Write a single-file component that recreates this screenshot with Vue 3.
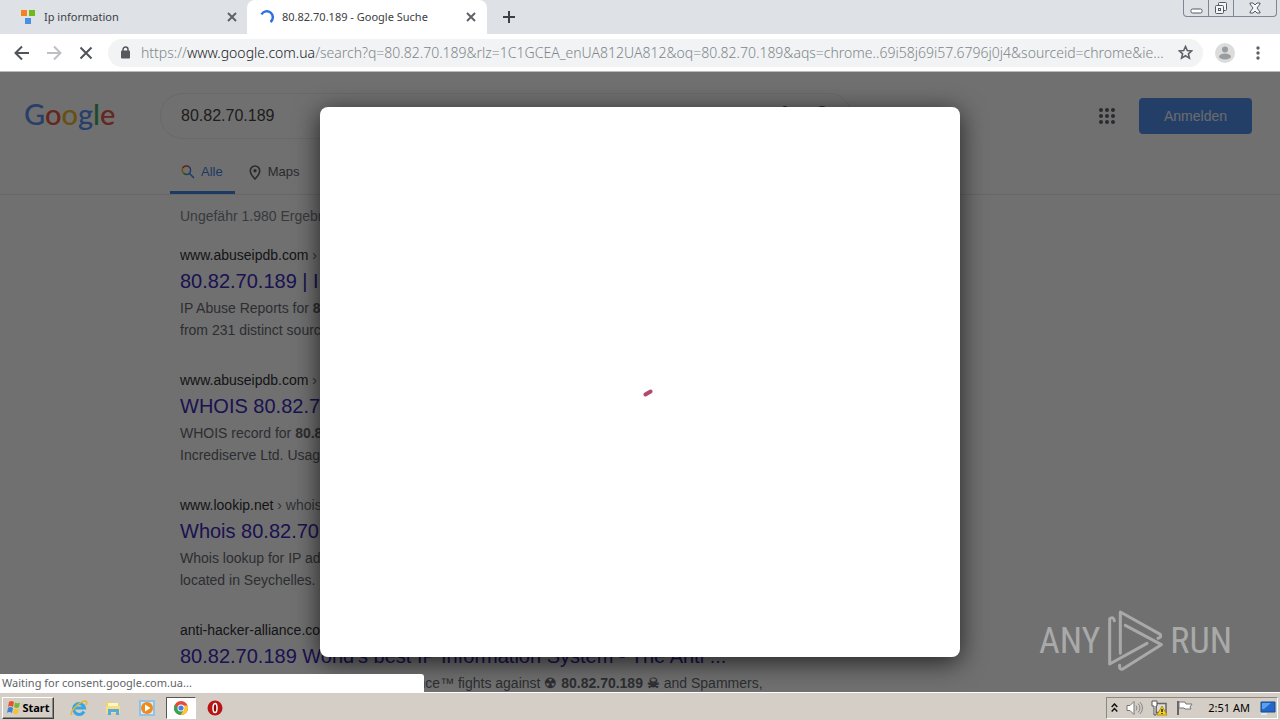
<script setup>
import { ref } from 'vue'

const query = ref('80.82.70.189')
const urlRest = '/search?q=80.82.70.189&rlz=1C1GCEA_enUA812UA812&oq=80.82.70.189&aqs=chrome..69i58j69i57.6796j0j4&sourceid=chrome&ie...'
const results = [
  { host: 'www.abuseipdb.com', path: 'check', title: '80.82.70.189 | IP', a: 'IP Abuse Reports for ', b: '80.82.70.189', c: 'from 231 distinct sources' },
  { host: 'www.abuseipdb.com', path: 'whois', title: 'WHOIS 80.82.70.189', a: 'WHOIS record for ', b: '80.82.70.189', c: 'Incrediserve Ltd. Usage' },
  { host: 'www.lookip.net', path: 'whois', title: 'Whois 80.82.70.189', a: 'Whois lookup for IP address', b: '', c: 'located in Seychelles.' }
]
</script>

<template>
  <div class="screen">
    <header class="tabs">
      <div class="tab first">
        <svg class="fav" width="14" height="14" viewBox="0 0 14 14"><path fill="#f58220" d="M0 0h6v6H0z" /><path fill="#6fb91b" d="M8 0h6v6H8z" /><path fill="#4a90e2" d="M4 8h6v6H4z" /></svg>
        <button class="tab-title">Ip information</button>
        <button class="close" aria-label="Close Ip information"><svg width="10" height="10" viewBox="0 0 10 10"><path d="M1 1l8 8M9 1L1 9" stroke="#5f6368" stroke-width="2" /></svg></button>
      </div>
      <div class="tab active">
        <svg class="fav" width="14" height="14" viewBox="0 0 14 14"><path d="M1.500 4.500A6 6 0 1 1 10.500 12" fill="none" stroke="#2f6fe4" stroke-width="2.400" /></svg>
        <button class="tab-title">80.82.70.189 - Google Suche</button>
        <button class="close" aria-label="Close Google Suche"><svg width="10" height="10" viewBox="0 0 10 10"><path d="M1 1l8 8M9 1L1 9" stroke="#5f6368" stroke-width="2" /></svg></button>
      </div>
      <button class="newtab" aria-label="New tab"><svg width="12" height="12" viewBox="0 0 12 12"><path d="M6 0v12M0 6h12" stroke="#3c4043" stroke-width="2" /></svg></button>
      <div class="winbtns">
        <button aria-label="Minimize"><svg width="13" height="13" viewBox="0 0 13 13"><rect x="1" y="7" width="11" height="4" rx="1.500" fill="#fff" stroke="#555b66" /></svg></button>
        <button aria-label="Restore"><svg width="14" height="14" viewBox="0 0 14 14" fill="#f4f5f7" stroke="#555b66"><rect x="4.500" y="1.500" width="8" height="8" rx="1" /><rect x="1.500" y="4.500" width="8" height="8" rx="1" /><rect x="4.500" y="7.500" width="2" height="2" /></svg></button>
        <button class="wide" aria-label="Close window"><svg width="12" height="12" viewBox="0 0 12 12"><path d="M1 1h3l2 2 2-2h3v1L8 6l3 4v1H8L6 9l-2 2H1v-1l3-4-3-4z" fill="#f6f7f8" stroke="#555b66" /></svg></button>
      </div>
    </header>

    <nav class="toolbar">
      <button aria-label="Back"><svg width="16" height="16" viewBox="0 0 16 16"><path d="M8 1.500L1.500 8 8 14.500M2 8h13" fill="none" stroke="#505357" stroke-width="2" /></svg></button>
      <button aria-label="Forward"><svg width="16" height="16" viewBox="0 0 16 16"><path d="M8 1.500L14.500 8 8 14.500M14 8H1" fill="none" stroke="#bdbfc2" stroke-width="2" /></svg></button>
      <button aria-label="Stop"><svg width="14" height="14" viewBox="0 0 14 14"><path d="M1.500 1.500l11 11M12.500 1.500l-11 11" stroke="#505357" stroke-width="2" /></svg></button>
      <div class="omnibox">
        <svg width="10" height="13" viewBox="0 0 10 13"><rect y="4.500" width="9" height="8" rx="1" fill="#55585c" /><path d="M2 5V3.500a2.500 2.500 0 0 1 5 0V5" fill="none" stroke="#55585c" stroke-width="1.500" /></svg>
        <div class="url"><span>https://</span><b>www.google.com.ua</b><span>{{ urlRest }}</span></div>
        <button class="star" aria-label="Bookmark"><svg width="15" height="15" viewBox="0 0 15 15"><path d="M7.500 1.500l1.800 4 4.400.4-3.300 2.900 1 4.300-3.900-2.300-3.900 2.300 1-4.300L1.300 5.900l4.400-.4z" fill="none" stroke="#5f6368" stroke-width="1.600" /></svg></button>
      </div>
      <button class="avatar" aria-label="Profile"><svg width="20" height="20" viewBox="0 0 20 20"><circle cx="10" cy="10" r="10" fill="#dcdcdc" /><circle cx="10" cy="6.500" r="3" fill="#9a9da0" /><ellipse cx="10" cy="13.500" rx="6" ry="3" fill="#9a9da0" /></svg></button>
      <button class="kebab" aria-label="Menu"><svg width="4" height="14" viewBox="0 0 4 14" fill="#5f6368"><circle cx="2" cy="2" r="1.700" /><circle cx="2" cy="7" r="1.700" /><circle cx="2" cy="12" r="1.700" /></svg></button>
    </nav>

    <div class="viewport">
      <main class="page">
        <div class="head">
          <a class="logo" href="#" aria-label="Google"><span class="bl">G</span><span class="re">o</span><span class="ye">o</span><span class="bl">g</span><span class="gr">l</span><span class="re">e</span></a>
          <form class="search" @submit.prevent>
            <input v-model="query" aria-label="Suche">
            <svg width="68" height="20" viewBox="0 0 68 20"><rect x="9" y="0" width="6" height="12" rx="3" fill="#555" /><path d="M6 8a6 6 0 0 0 12 0M12 14v4" fill="none" stroke="#555" stroke-width="2" /><circle cx="49" cy="7" r="6" fill="none" stroke="#555" stroke-width="2" /><path d="M53 11l6 7" stroke="#555" stroke-width="2" /></svg>
          </form>
          <button class="apps" aria-label="Google-Apps"><svg width="16" height="16" viewBox="0 0 16 16" fill="#5f6368"><circle v-for="n in 9" :key="n" :cx="2 + ((n - 1) % 3) * 6" :cy="2 + Math.floor((n - 1) / 3) * 6" r="2" /></svg></button>
          <button class="login">Anmelden</button>
        </div>
        <div class="kinds">
          <a class="kind on" href="#"><svg width="14" height="14" viewBox="0 0 14 14" fill="none" stroke-width="1.500"><path d="M1.700 3A4.500 4.500 0 0 1 8 1.700" stroke="#ea4335" /><path d="M1.700 3a4.500 4.500 0 0 0 .8 5" stroke="#fbbc05" /><path d="M2.500 8a4.500 4.500 0 0 0 4 1.500" stroke="#34a853" /><path d="M8 1.700a4.500 4.500 0 0 1-1.500 7.800M8.500 8.500L13 13" stroke="#4285f4" /></svg>Alle</a>
          <a class="kind" href="#"><svg width="12" height="15" viewBox="0 0 12 15"><path d="M6 1a4.700 4.700 0 0 1 4.700 4.700C10.700 9 6 14 6 14S1.300 9 1.300 5.700A4.700 4.700 0 0 1 6 1z" fill="none" stroke="#5f6368" stroke-width="1.600" /><circle cx="6" cy="5.700" r="1.700" fill="#5f6368" /></svg>Maps</a>
        </div>
        <div class="list">
          <p class="stats">Ungefähr 1.980 Ergebnisse</p>
          <article v-for="r in results" :key="r.title" class="result">
            <div class="cite">{{ r.host }} <span>› {{ r.path }}</span></div>
            <h3><a href="#">{{ r.title }}</a></h3>
            <p>{{ r.a }}<b>{{ r.b }}</b></p>
            <p>{{ r.c }}</p>
          </article>
          <article class="result">
            <div class="cite">anti-hacker-alliance.com</div>
            <h3><a href="#">80.82.70.189 World's best IP Information System - The Anti ...</a></h3>
            <p class="tail">Alliance™ fights against <b>☢ 80.82.70.189 ☠</b> and Spammers,</p>
          </article>
        </div>
      </main>
      <div class="overlay">
        <div class="dialog" role="dialog" aria-label="Consent"><i class="loader"></i></div>
      </div>
      <div class="mark" aria-label="ANY RUN">
        <span>ANY</span>
        <svg width="56" height="64" viewBox="327 57 168 192" fill="none" stroke="#a9a9a9" stroke-width="9" stroke-linejoin="round" stroke-linecap="round"><path d="M349 92Q347 78 335 86V222L447 160" /><path d="M367 190V66L487 133Q491 143 480 145" /><path d="M382 106L490 164 373 238Q363 238 365 226" /></svg>
        <span>RUN</span>
      </div>
      <div class="status">Waiting for consent.google.com.ua...</div>
    </div>

    <footer class="taskbar">
      <button class="start">
        <svg width="15" height="15" viewBox="0 0 15 15"><path d="M3 2q2-2 5 0L7 7Q4 5 2 7z" fill="#e8542a" /><path d="M9 2.500q3 1.500 5 0L13 7q-2 2-5 0z" fill="#78b833" /><path d="M2 8q2-2 5 0l-1 5q-3-2-5 0z" fill="#3b83d6" /><path d="M8 8.500q3 1.500 5 0L12 13q-2 2-5 0z" fill="#f6c32c" /></svg>Start
      </button>
      <div class="quick">
        <button aria-label="Internet Explorer"><svg width="18" height="18" viewBox="0 0 18 18" fill="none"><path d="M14 12.500A5.500 5.500 0 1 1 14.500 9H5" stroke="#37a6e2" stroke-width="3" /><path d="M2 16C-1 13 9 3 15 2q3 0 1 4" stroke="#e9b62e" stroke-width="1.500" /></svg></button>
        <button aria-label="Explorer"><svg width="18" height="18" viewBox="0 0 18 18"><path d="M2 3h5l1 2h7v9H2z" fill="#efd06a" /><path d="M4 4h10v5H4z" fill="#fff6bd" /><path d="M2 7h14v7H2z" fill="#f5de87" /><path d="M4 16v-6h11v6h-3v-3H7v3z" fill="#58aad8" /></svg></button>
        <button aria-label="Media Player"><svg width="18" height="18" viewBox="0 0 18 18"><path d="M1 1h16v16H1z" fill="#8fc3ec" /><path d="M3 3h12v12H3z" fill="#d8ebf8" /><circle cx="9" cy="9" r="6" fill="#f28a18" /><path d="M7 5.500v7L12.500 9z" fill="#fff" /></svg></button>
        <button class="pressed" aria-label="Chrome"><svg width="16" height="16" viewBox="0 0 16 16"><circle cx="8" cy="8" r="7" fill="#e24a3c" /><path d="M2 4.500A7 7 0 0 0 7.500 15L10 10 6 10z" fill="#35a552" /><path d="M14.500 5.500A7 7 0 0 1 7.500 15l4-6-1-3.500z" fill="#fbc92f" /><circle cx="8" cy="8" r="3.500" fill="#fff" /><circle cx="8" cy="8" r="2.600" fill="#4380e8" /></svg></button>
        <button aria-label="Opera"><svg width="16" height="16" viewBox="0 0 16 16"><circle cx="8" cy="8" r="7.500" fill="#b91515" /><ellipse cx="8" cy="8" rx="2" ry="4.500" fill="#8b0808" stroke="#fff" stroke-width="1.500" /></svg></button>
      </div>
      <div class="tray">
        <svg width="7" height="10" viewBox="0 0 7 10"><path d="M.7 4l2.800-3 2.800 3M.7 8.500l2.800-3 2.800 3" fill="none" stroke="#111" stroke-width="1.500" /></svg>
        <svg width="17" height="16" viewBox="0 0 17 16"><path d="M1 5.500h3l4-4v13l-4-4H1z" fill="#fff" stroke="#777" /><path d="M10 5.500q2 2.500 0 5M12 3.500q4 4.500 0 9M14 2q5 6 0 12" fill="none" stroke="#888" /></svg>
        <svg width="17" height="16" viewBox="0 0 17 16"><path d="M5 3.500h10v9H5z" fill="#ddd" stroke="#666" stroke-width="1.500" /><path d="M1 1h5v5H5v9H3V6H1z" fill="#fff" stroke="#555" /><path d="M11 6l5 9H6z" fill="#f7d51d" stroke="#b79200" /><path d="M11 9v3M11 13v1" stroke="#222" stroke-width="1.500" /></svg>
        <svg width="17" height="16" viewBox="0 0 17 16"><path d="M2 1v14" stroke="#666" stroke-width="2" /><path d="M3 2h6l1 2h6l-2 3 1 2H9L8 8H3z" fill="#fff" stroke="#777" /></svg>
        <time>2:51 AM</time>
        <svg width="16" height="14" viewBox="0 0 16 14"><path d="M1 1h14v10H1z" fill="#2368c8" stroke="#17498f" /><path d="M2 2h9L4 8H2z" fill="#5aa0ec" /><path d="M1 12h6v2H1z" fill="#dceaf8" /></svg>
      </div>
    </footer>
  </div>
</template>

<style>
body { margin: 0; overflow: hidden; }
</style>

<style scoped>
* { box-sizing: border-box; }
.screen { display: flex; flex-direction: column; height: 100vh; overflow: hidden; font: 11px/16px "Noto Sans", "DejaVu Sans", sans-serif; color: #3c4043; }
button { border: 0; padding: 0; background: none; font: inherit; color: inherit; display: flex; align-items: center; justify-content: center; }
svg { display: block; flex: none; }
a { text-decoration: none; color: inherit; }
p, h3 { margin: 0; font-weight: 400; }

.tabs { display: flex; height: 34px; background: #dee1e6; flex: none; }
.tab { display: flex; align-items: center; width: 240px; padding: 0 11px 0 13px; }
.tab.first { width: 247px; padding: 0 10px 0 21px; }
.tab.active { background: #fff; border-radius: 8px 8px 0 0; }
.tab-title { margin-left: 9px; flex: 1; justify-content: flex-start; white-space: nowrap; }
.tab.active .tab-title { margin-left: 8px; }
.newtab { width: 44px; }
.winbtns { display: flex; margin: 0 3px 0 auto; height: 17px; border: 1px solid #7f8693; border-top: 0; border-radius: 0 0 4px 4px; }
.winbtns button { width: 25px; border-right: 1px solid #7f8693; }
.winbtns .wide { width: 42px; border: 0; }

.toolbar { display: flex; align-items: center; height: 37px; background: #fff; padding: 0 8px 0 6px; flex: none; }
.toolbar > button { width: 32px; height: 32px; }
.omnibox { display: flex; align-items: center; flex: 1; min-width: 0; height: 28px; margin: 0 8px 0 6px; padding: 0 10px 0 13px; background: #f1f3f4; border-radius: 14px; }
.url { flex: 1; min-width: 0; margin-left: 10px; font-size: 14px; line-height: 20px; color: #80868b; white-space: nowrap; overflow: hidden; font-weight: 300; }
.url b { font-weight: 300; color: #202124; }
.toolbar > .avatar { width: 28px; }
.toolbar > .kebab { width: 28px; margin-left: 5px; }

.viewport { position: relative; flex: 1; min-height: 0; overflow: hidden; border-top: 1px solid #bbb; }
.page { height: 100%; background: #fff; font-family: "Liberation Sans", Arial, sans-serif; }
.head { display: flex; align-items: center; height: 87px; padding: 0 28px 0 24px; }
.logo { width: 136px; padding-bottom: 4px; font: 500 29px/40px Lato, sans-serif; }
.bl { color: #5a8ff0; } .re { color: #e8574a; } .ye { color: #e9b92a; } .gr { color: #45a860; }
.search { display: flex; align-items: center; width: 692px; height: 46px; padding: 0 10px 0 20px; border: 1px solid #eceef1; border-radius: 23px; }
.search input { flex: 1; min-width: 0; border: 0; padding: 0; background: none; outline: 0; font: 16px/20px "Liberation Sans", Arial, sans-serif; color: #444; }
.apps { margin-left: auto; width: 16px; }
.login { margin-left: 24px; width: 113px; height: 36px; border-radius: 4px; background: #5090ea; color: #f0f4fa; font-size: 14px; }
.kinds { display: flex; height: 36px; padding-left: 170px; border-bottom: 1px solid #ebebeb; font-size: 13px; line-height: 16px; }
.kind { display: flex; align-items: center; gap: 7px; height: 35px; padding: 0 12px 9px 14px; color: #5f6368; }
.kind.on { gap: 6px; padding: 0 12px 6px 11px; color: #4285e0; border-bottom: 3px solid #4285e0; }
.list { padding: 10px 0 0 180px; font-size: 14px; line-height: 22px; color: #666a70; }
.stats { margin-bottom: 17px; color: #80858a; }
.result { width: 600px; margin-bottom: 28px; white-space: nowrap; }
.cite { color: #303134; }
.cite span { color: #70757a; }
.result h3 { font-size: 20px; line-height: 31px; color: #3d2bb8; }
.tail { padding-left: 211px; }

.overlay { position: absolute; inset: 0; display: flex; align-items: center; justify-content: center; background: rgba(0, 0, 0, 0.56); }
.dialog { display: flex; align-items: center; justify-content: center; width: 50%; height: 550px; border-radius: 8px; background: #fff; box-shadow: 0 5px 26px rgba(0, 0, 0, 0.7); }
.loader { width: 10px; height: 4px; margin: 22px 0 0 15px; border-radius: 2px; background: #b04a6e; transform: rotate(-30deg); }
.status { position: absolute; left: 0; bottom: 0; width: 424px; height: 18px; padding-left: 2px; line-height: 18px; border-radius: 0 3px 0 0; background: #fff; color: #5f6368; }
.mark { position: absolute; right: 48px; bottom: 19px; display: flex; align-items: center; gap: 7px; color: #a9a9a9; font: 36px/44px "Liberation Sans Narrow", "Roboto Condensed", "DejaVu Sans Condensed", sans-serif; }

.taskbar { display: flex; align-items: center; height: 28px; flex: none; padding: 2px 2px 0; background: #d4cec6; border-top: 1px solid #fff; color: #000; }
.start { width: 52px; height: 22px; gap: 1px; border: 1px solid; border-color: #fff #404040 #404040 #fff; box-shadow: inset -1px -1px #8c8880; font-weight: 700; }
.quick { display: flex; margin-left: 10px; gap: 4px; }
.quick button { width: 30px; height: 22px; }
.quick .pressed { background: #fff; border: 1px solid; border-color: #555 #fff #fff #555; }
.tray { display: flex; align-items: center; gap: 8px; height: 22px; margin-left: auto; padding: 0 1px 0 4px; border: 1px solid; border-color: #8c8880 #fff #fff #8c8880; }
.tray time { margin: 0 2px 0 7px; }
</style>
